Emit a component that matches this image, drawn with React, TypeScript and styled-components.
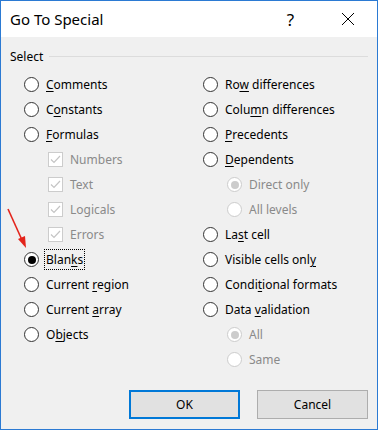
import styled, { createGlobalStyle } from "styled-components";

const GlobalStyle = createGlobalStyle`
  html, body {
    margin: 0;
    padding: 0;
    background: #ffffff;
  }
  * {
    box-sizing: border-box;
  }
`;

const Window = styled.div`
  position: relative;
  width: 378px;
  height: 430px;
  border: 1px solid #2b7ad3;
  background: #f0f0f0;
  font-family: "Noto Sans", "Open Sans", sans-serif;
  color: #000;
  display: flex;
  flex-direction: column;
`;

const TitleBar = styled.div`
  height: 36px;
  background: #ffffff;
  display: flex;
  align-items: center;
  padding-left: 9px;
`;

const Title = styled.div`
  flex: 1;
  font-size: 15px;
`;

const TitleButton = styled.div<{ $width: number }>`
  width: ${(p) => p.$width}px;
  height: 36px;
  display: flex;
  align-items: center;
  justify-content: center;
  font-size: 17px;
`;

const Body = styled.div`
  flex: 1;
  display: flex;
  flex-direction: column;
  padding: 10px 9px 9px 9px;
`;

const GroupHeader = styled.div`
  display: flex;
  align-items: center;
  gap: 6px;
  font-size: 12px;
  height: 18px;
`;

const GroupLine = styled.div`
  flex: 1;
  height: 1px;
  background: #dcdcdc;
`;

const Columns = styled.div`
  display: grid;
  grid-template-columns: 179px 1fr;
  padding: 7px 0 0 14px;
`;

const Column = styled.div`
  display: flex;
  flex-direction: column;
`;

const Row = styled.div<{ $indent?: boolean; $disabled?: boolean }>`
  height: 25px;
  display: flex;
  align-items: center;
  gap: 6px;
  padding-left: ${(p) => (p.$indent ? "24px" : "0")};
  font-size: 12px;
  color: ${(p) => (p.$disabled ? "#8a8a8a" : "#000")};
`;

const Radio = styled.span<{ $checked?: boolean; $disabled?: boolean }>`
  width: 15px;
  height: 15px;
  border-radius: 50%;
  border: 1px solid ${(p) => (p.$disabled ? "#cccccc" : "#333333")};
  background: #ffffff;
  display: flex;
  align-items: center;
  justify-content: center;
  flex-shrink: 0;
  &::after {
    content: "";
    display: ${(p) => (p.$checked ? "block" : "none")};
    width: 8px;
    height: 8px;
    border-radius: 50%;
    background: ${(p) => (p.$disabled ? "#cccccc" : "#000000")};
  }
`;

const CheckBox = styled.span`
  width: 15px;
  height: 15px;
  border: 1px solid #cccccc;
  background: #ffffff;
  display: flex;
  align-items: center;
  justify-content: center;
  flex-shrink: 0;
`;

const Label = styled.span<{ $focused?: boolean }>`
  padding: 1px 1px;
  line-height: 17px;
  outline: ${(p) => (p.$focused ? "1px dotted #000" : "none")};
  outline-offset: 0;
`;

const Key = styled.span`
  text-decoration: underline;
  text-underline-offset: 2px;
`;

const Footer = styled.div`
  margin-top: auto;
  display: flex;
  justify-content: flex-end;
  gap: 17px;
  padding-bottom: 1px;
`;

const Button = styled.button<{ $default?: boolean }>`
  width: 111px;
  height: 29px;
  font-family: inherit;
  font-size: 12px;
  color: #000;
  background: #e1e1e1;
  border: ${(p) => (p.$default ? "2px solid #0078d7" : "1px solid #adadad")};
  padding: 0;
`;

const Arrow = styled.svg`
  position: absolute;
  left: 4px;
  top: 205px;
`;

type Item = {
  kind: "radio" | "check";
  pre: string;
  key?: string;
  post?: string;
  indent?: boolean;
  disabled?: boolean;
  checked?: boolean;
  focused?: boolean;
};

const leftItems: Item[] = [
  { kind: "radio", pre: "", key: "C", post: "omments" },
  { kind: "radio", pre: "C", key: "o", post: "nstants" },
  { kind: "radio", pre: "", key: "F", post: "ormulas" },
  { kind: "check", pre: "Numbers", indent: true, disabled: true },
  { kind: "check", pre: "Text", indent: true, disabled: true },
  { kind: "check", pre: "Logicals", indent: true, disabled: true },
  { kind: "check", pre: "Errors", indent: true, disabled: true },
  { kind: "radio", pre: "Blan", key: "k", post: "s", checked: true, focused: true },
  { kind: "radio", pre: "Current ", key: "r", post: "egion" },
  { kind: "radio", pre: "Current ", key: "a", post: "rray" },
  { kind: "radio", pre: "O", key: "b", post: "jects" },
];

const rightItems: Item[] = [
  { kind: "radio", pre: "Ro", key: "w", post: " differences" },
  { kind: "radio", pre: "Colu", key: "m", post: "n differences" },
  { kind: "radio", pre: "", key: "P", post: "recedents" },
  { kind: "radio", pre: "", key: "D", post: "ependents" },
  { kind: "radio", pre: "Direct only", indent: true, disabled: true, checked: true },
  { kind: "radio", pre: "All levels", indent: true, disabled: true },
  { kind: "radio", pre: "La", key: "s", post: "t cell" },
  { kind: "radio", pre: "Visible cells onl", key: "y" },
  { kind: "radio", pre: "Condi", key: "t", post: "ional formats" },
  { kind: "radio", pre: "Data ", key: "v", post: "alidation" },
  { kind: "radio", pre: "All", indent: true, disabled: true, checked: true },
  { kind: "radio", pre: "Same", indent: true, disabled: true },
];

const Option = ({ item }: { item: Item }) => (
  <Row $indent={item.indent} $disabled={item.disabled}>
    {item.kind === "radio" ? (
      <Radio $checked={item.checked} $disabled={item.disabled} />
    ) : (
      <CheckBox>
        <svg width="11" height="9" viewBox="0 0 11 9">
          <path d="M1 4.5 L4 7.5 L10 1" fill="none" stroke="#c4c4c4" strokeWidth="1.2" />
        </svg>
      </CheckBox>
    )}
    <Label $focused={item.focused}>
      {item.pre}
      {item.key && <Key>{item.key}</Key>}
      {item.post}
    </Label>
  </Row>
);

const App = () => {
  return (
    <>
      <GlobalStyle />
      <Window>
        <TitleBar>
          <Title>Go To Special</Title>
          <TitleButton $width={57}>?</TitleButton>
          <TitleButton $width={58}>
            <svg width="14" height="14" viewBox="0 0 14 14">
              <path d="M1 1 L13 13 M13 1 L1 13" stroke="#000" strokeWidth="1" />
            </svg>
          </TitleButton>
        </TitleBar>
        <Body>
          <GroupHeader>
            Select
            <GroupLine />
          </GroupHeader>
          <Columns>
            <Column>
              {leftItems.map((it, i) => (
                <Option key={i} item={it} />
              ))}
            </Column>
            <Column>
              {rightItems.map((it, i) => (
                <Option key={i} item={it} />
              ))}
            </Column>
          </Columns>
          <Footer>
            <Button $default>OK</Button>
            <Button>Cancel</Button>
          </Footer>
        </Body>
        {/* red arrow pointing at Blanks */}
        <Arrow width="26" height="46" viewBox="0 0 26 46">
          <path d="M3 3 L17 34" stroke="#e3241b" strokeWidth="1.6" fill="none" />
          <path d="M21 42 L13 33 L20 30 Z" fill="#e3241b" />
        </Arrow>
      </Window>
    </>
  );
};

export default App;
